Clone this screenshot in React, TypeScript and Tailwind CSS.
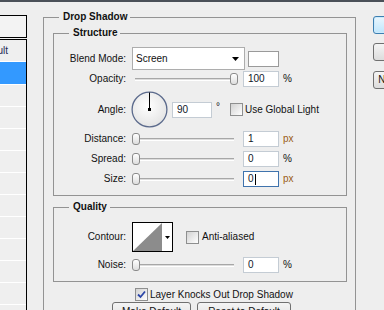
import React from "react";

const Slider = ({ value }: { value: number }) => (
  <div className="relative h-[16px] w-[105px] shrink-0">
    <div className="absolute left-[3px] top-[7px] h-[3px] w-[99px] border-t border-t-[#a7a7a7] border-b border-b-white bg-[#dcdcdc]" />
    <div
      className="absolute top-[2px] h-[12px] w-[8px] rounded-[3px] border border-[#8b8b8b] bg-linear-to-b from-white to-[#dedede]"
      style={{ left: `${(value / 100) * 98}px` }}
    />
  </div>
);

const Field = ({ value, w = 36, focused = false }: { value: string; w?: number; focused?: boolean }) => (
  <div
    className={`flex h-[16px] shrink-0 items-center border bg-white pl-[4px] text-[#101828] ${
      focused ? "border-[#3f73ad]" : "border-[#c4ccd4]"
    } ${w === 40 ? "w-[40px]" : "w-[36px]"}`}
  >
    <span>{value}</span>
    {focused && <span className="ml-[1px] h-[11px] w-[1px] bg-black" />}
  </div>
);

const Check = ({ checked = false }: { checked?: boolean }) => (
  <div className="flex h-[13px] w-[13px] shrink-0 items-center justify-center border border-[#8e8f8f] bg-linear-to-br from-[#d2d2d2] to-white">
    {checked && (
      <svg width="9" height="9" viewBox="0 0 9 9">
        <path d="M1 4.5 L3.5 7 L8 1.5" fill="none" stroke="#2b46a8" strokeWidth="1.8" />
      </svg>
    )}
  </div>
);

const Label = ({ children }: { children: React.ReactNode }) => (
  <div className="w-[72px] shrink-0 text-right">{children}</div>
);

const Group = ({
  title,
  className,
  children,
}: {
  title: string;
  className: string;
  children: React.ReactNode;
}) => (
  <div className={`border border-[#939393] ${className}`}>
    <div className="-mt-[7px] flex">
      <span className="ml-[15px] bg-[#eeeeee] pl-[4px] pr-[3px] font-bold leading-[12px] text-[#111]">{title}</span>
    </div>
    {children}
  </div>
);

export default function App() {
  return (
    <div className="h-[310px] w-[384px] overflow-hidden bg-[#eeeeee] font-[family-name:Liberation_Sans,Arial,sans-serif] text-[10px] leading-[12px] text-[#111]">
      <div className="h-[2px] bg-[#4a5058]" />
      <div className="flex items-start">
        {/* left list */}
        <div className="flex h-[310px] w-[27px] shrink-0 flex-col pt-[13px]">
          <div className="h-[23px] border-y border-r border-black bg-[#f3f3f3]" />
          <div className="mt-[1px] flex-1 border-t border-r border-black bg-[#efefef]">
            <div className="flex h-[22px] items-center justify-end overflow-hidden border-b border-white pr-[18px] text-[#1d2a55]">
              <span className="whitespace-nowrap">Default</span>
            </div>
            <div className="h-[23px] border-b border-white bg-[#3399ff]" />
            {Array.from({ length: 10 }).map((_, i) => (
              <div key={i} className="h-[22px] border-b border-white" />
            ))}
          </div>
        </div>

        {/* main group */}
        <div className="ml-[16px] mt-[15px] w-[313px] shrink-0">
          <Group title="Drop Shadow" className="pb-[20px]">
            <Group title="Structure" className="ml-[9px] mr-[8px] mt-[10px] pb-[8px]">
              {/* Blend */}
              <div className="mt-[8px] flex h-[23px] items-center">
                <Label>Blend Mode:</Label>
                <div className="ml-[6px] flex h-[23px] w-[113px] items-center justify-between border border-[#adadad] bg-white pl-[3px] pr-[5px]">
                  <span>Screen</span>
                  <svg width="7" height="4" viewBox="0 0 7 4">
                    <polygon points="0,0 7,0 3.5,4" fill="#000" />
                  </svg>
                </div>
                <div className="ml-[3px] h-[16px] w-[31px] border border-[#9a9a9a] bg-white" />
              </div>
              {/* Opacity */}
              <div className="mt-[1px] flex h-[16px] items-center">
                <Label>Opacity:</Label>
                <div className="ml-[6px]">
                  <Slider value={100} />
                </div>
                <div className="ml-[6px]">
                  <Field value="100" />
                </div>
                <span className="ml-[4px]">%</span>
              </div>
              {/* Angle */}
              <div className="mt-[4px] flex h-[37px] items-center">
                <Label>Angle:</Label>
                <svg className="ml-[5px] shrink-0" width="37" height="37" viewBox="0 0 37 37">
                  <defs>
                    <radialGradient id="dial" cx="45%" cy="40%" r="65%">
                      <stop offset="0" stopColor="#ffffff" />
                      <stop offset="1" stopColor="#e2e2e2" />
                    </radialGradient>
                  </defs>
                  <circle cx="18.5" cy="18.5" r="17.4" fill="url(#dial)" stroke="#5b6a8c" strokeWidth="1.3" />
                  <line x1="18.5" y1="18.5" x2="18.5" y2="1.5" stroke="#000" strokeWidth="1" />
                  <rect x="17" y="17" width="3" height="3" fill="#000" />
                </svg>
                <div className="ml-[4px]">
                  <Field value="90" w={40} />
                </div>
                <span className="ml-[4px] -mt-[6px]">°</span>
                <div className="ml-[10px]">
                  <Check />
                </div>
                <span className="ml-[2px] whitespace-nowrap">Use Global Light</span>
              </div>
              {/* Distance */}
              <div className="mt-[3px] flex h-[16px] items-center">
                <Label>Distance:</Label>
                <div className="ml-[6px]">
                  <Slider value={0} />
                </div>
                <div className="ml-[6px]">
                  <Field value="1" />
                </div>
                <span className="ml-[4px] text-[#9a5c14]">px</span>
              </div>
              {/* Spread */}
              <div className="mt-[4px] flex h-[16px] items-center">
                <Label>Spread:</Label>
                <div className="ml-[6px]">
                  <Slider value={0} />
                </div>
                <div className="ml-[6px]">
                  <Field value="0" />
                </div>
                <span className="ml-[4px]">%</span>
              </div>
              {/* Size */}
              <div className="mt-[4px] flex h-[16px] items-center">
                <Label>Size:</Label>
                <div className="ml-[6px]">
                  <Slider value={0} />
                </div>
                <div className="ml-[6px]">
                  <Field value="0" focused />
                </div>
                <span className="ml-[4px] text-[#9a5c14]">px</span>
              </div>
            </Group>

            <Group title="Quality" className="ml-[9px] mr-[8px] mt-[11px] pb-[8px]">
              <div className="mt-[9px] flex h-[30px] items-center">
                <Label>Contour:</Label>
                <div className="ml-[6px] flex h-[30px] w-[41px] shrink-0 border border-black bg-white">
                  <svg width="29" height="28" viewBox="0 0 29 28" className="shrink-0">
                    <polygon points="0,28 29,0 29,28" fill="#8c8c8c" />
                  </svg>
                  <div className="flex flex-1 items-center justify-center">
                    <svg width="5" height="3" viewBox="0 0 5 3">
                      <polygon points="0,0 5,0 2.5,3" fill="#000" />
                    </svg>
                  </div>
                </div>
                <div className="ml-[13px]">
                  <Check />
                </div>
                <span className="ml-[3px] whitespace-nowrap">Anti-aliased</span>
              </div>
              <div className="mt-[5px] flex h-[16px] items-center">
                <Label>Noise:</Label>
                <div className="ml-[6px]">
                  <Slider value={0} />
                </div>
                <div className="ml-[6px]">
                  <Field value="0" />
                </div>
                <span className="ml-[4px]">%</span>
              </div>
            </Group>

            <div className="ml-[91px] mt-[6px] flex h-[13px] items-center">
              <Check checked />
              <span className="ml-[2px] whitespace-nowrap">Layer Knocks Out Drop Shadow</span>
            </div>

            <div className="ml-[68px] mt-[1px] flex gap-[6px]">
              <div className="flex h-[23px] w-[79px] justify-center rounded-[3px] border border-[#707070] bg-linear-to-b from-[#f4f4f4] to-[#dcdcdc] pt-[3px]">
                Make Default
              </div>
              <div className="flex h-[23px] w-[94px] justify-center rounded-[3px] border border-[#707070] bg-linear-to-b from-[#f4f4f4] to-[#dcdcdc] pt-[3px]">
                Reset to Default
              </div>
            </div>
          </Group>
        </div>

        {/* right buttons */}
        <div className="ml-[17px] mt-[14px] flex shrink-0 flex-col">
          <div className="flex h-[18px] w-[64px] items-center justify-center rounded-[3px] border border-[#3c7fb1] bg-linear-to-b from-[#eaf6fd] to-[#bee6fd] shadow-[inset_0_0_0_1px_#cdeafc]">
            OK
          </div>
          <div className="mt-[9px] flex h-[18px] w-[64px] items-center justify-center rounded-[3px] border border-[#707070] bg-linear-to-b from-[#f4f4f4] to-[#dcdcdc]">
            Cancel
          </div>
          <div className="mt-[10px] flex h-[18px] w-[64px] items-center justify-center rounded-[3px] border border-[#707070] bg-linear-to-b from-[#f4f4f4] to-[#dcdcdc]">
            New Style...
          </div>
        </div>
      </div>
    </div>
  );
}
